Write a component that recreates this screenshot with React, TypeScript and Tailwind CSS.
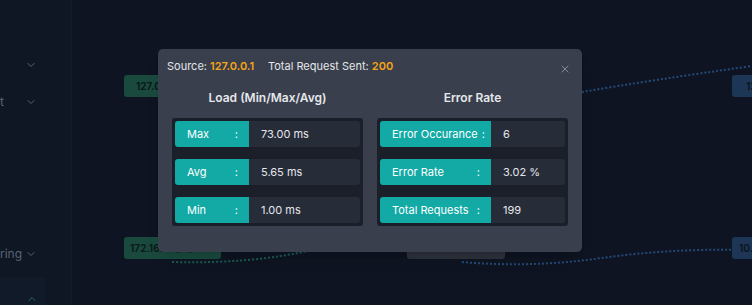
import { ChevronDown, ChevronUp, X } from "lucide-react";

const load = [
  { label: "Max", value: "73.00 ms" },
  { label: "Avg", value: "5.65 ms" },
  { label: "Min", value: "1.00 ms" },
];

const errors = [
  { label: "Error Occurance", value: "6" },
  { label: "Error Rate", value: "3.02 %" },
  { label: "Total Requests", value: "199" },
];

function StatPanel({
  title,
  rows,
  labelWidth,
}: {
  title: string;
  rows: { label: string; value: string }[];
  labelWidth: string;
}) {
  return (
    <div className="flex w-[191px] flex-col">
      <h3 className="h-[20px] text-center text-[12px] font-semibold leading-[20px] text-[#e5e7eb]">
        {title}
      </h3>
      <div className="mt-[10px] flex flex-col gap-[12px] rounded-[3px] bg-[#1b1f29] p-[3px]">
        {rows.map((r) => (
          <div key={r.label} className="flex h-[26px] overflow-hidden rounded-[3px] bg-[#272c39] text-[11px]">
            <div
              className={`flex ${labelWidth} shrink-0 items-center justify-between gap-[4px] whitespace-nowrap bg-[#13a9a5] pl-[12px] pr-[11px] text-white`}
            >
              <span>{r.label}</span>
              <span>:</span>
            </div>
            <div className="flex items-center pl-[12px] text-[#e5e7eb]">{r.value}</div>
          </div>
        ))}
      </div>
    </div>
  );
}

export default function App() {
  return (
    <div
      className="relative flex h-[305px] w-[752px] overflow-hidden bg-[#0e1421]"
      style={{ fontFamily: "Inter, 'Noto Sans', sans-serif" }}
    >
      {/* sidebar (dimmed behind overlay) */}
      <aside className="flex w-[72px] shrink-0 flex-col border-r border-[#141b29] bg-[#0f1624] text-[12px] text-[#5b6373]">
        <div className="mt-[58px] flex h-[14px] items-center justify-end pr-[34px]">
          <ChevronDown size={12} strokeWidth={2} />
        </div>
        <div className="mt-[23px] flex h-[14px] items-center justify-between pr-[34px]">
          <span>t</span>
          <ChevronDown size={12} strokeWidth={2} />
        </div>
        <div className="mt-auto flex h-[14px] items-center justify-between pr-[34px]">
          <span>ring</span>
          <ChevronDown size={12} strokeWidth={2} />
        </div>
        <div className="mt-[16px] flex h-[28px] w-[46px] items-end justify-end rounded-tr-[4px] bg-[#111a28] pr-[8px] text-[#1f6e6a]">
          <ChevronUp size={12} strokeWidth={2} />
        </div>
      </aside>

      {/* canvas */}
      <div className="relative flex-1">
        <svg className="absolute inset-0" width="680" height="305">
          <path d="M510 92 Q580 80 680 66" stroke="#244a78" strokeWidth="2" strokeDasharray="2 2" fill="none" />
          <path d="M100 262 Q180 264 240 250" stroke="#1a5a55" strokeWidth="2" strokeDasharray="2 2" fill="none" />
          <path d="M390 262 Q460 268 530 258 T680 250" stroke="#244a78" strokeWidth="2" strokeDasharray="2 2" fill="none" />
        </svg>
        <div className="absolute left-[52px] top-[75px] flex h-[22px] w-[100px] items-center rounded-[3px] bg-[#1a4a3e] pl-[12px] text-[10px] font-bold text-[#0c1a18]">
          127.0.0.1
        </div>
        <div className="absolute left-[52px] top-[237px] flex h-[22px] w-[97px] items-center rounded-[3px] bg-[#1a4a3e] pl-[6px] text-[10px] font-bold text-[#0c1a18]">
          172.16.1.1 (...)
        </div>
        <div className="absolute left-[335px] top-[237px] h-[22px] w-[98px] rounded-[3px] bg-[#2d313b]" />
        <div className="absolute left-[660px] top-[75px] flex h-[22px] w-[40px] items-center rounded-[3px] bg-[#1e3655] pl-[14px] text-[10px] font-bold text-[#0c1626]">
          12
        </div>
        <div className="absolute left-[660px] top-[237px] flex h-[22px] w-[40px] items-center rounded-[3px] bg-[#1e3655] pl-[7px] text-[10px] font-bold text-[#0c1626]">
          10.1
        </div>
      </div>

      {/* modal */}
      <div className="absolute left-[158px] top-[49px] w-[424px] rounded-[5px] bg-[#393f4c] px-[14px] pb-[26px] pt-[8px] shadow-lg">
        <div className="flex items-center justify-between">
          <div className="-ml-[5px] flex gap-[14px] text-[11px] text-[#e5e7eb]">
            <span>
              Source: <span className="font-semibold text-[#f5a417]">127.0.0.1</span>
            </span>
            <span>
              Total Request Sent: <span className="font-semibold text-[#f5a417]">200</span>
            </span>
          </div>
          <X size={12} strokeWidth={1.6} className="mr-[-3px] mt-[6px] text-[#9aa0ab]" />
        </div>
        <div className="mt-[13px] flex justify-between">
          <StatPanel title="Load (Min/Max/Avg)" rows={load} labelWidth="w-[74px]" />
          <StatPanel title="Error Rate" rows={errors} labelWidth="w-[111px]" />
        </div>
      </div>
    </div>
  );
}
